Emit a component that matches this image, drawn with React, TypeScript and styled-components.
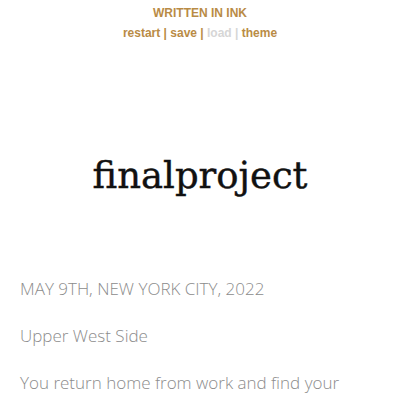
import React from "react";
import styled, { createGlobalStyle } from "styled-components";

const GlobalStyle = createGlobalStyle`
  html, body {
    margin: 0;
    padding: 0;
    background: #ffffff;
  }
  body {
    overflow: hidden;
  }
`;

const Page = styled.div`
  width: 400px;
  height: 400px;
  overflow: hidden;
  background: #ffffff;
`;

const Header = styled.header`
  padding-top: 3px;
  text-align: center;
  font-family: "Liberation Sans", Arial, sans-serif;
  font-weight: bold;
  font-size: 12px;
  line-height: 20px;
  color: #b98b45;
`;

const Byline = styled.h2`
  margin: 0;
  font-size: 12px;
  font-weight: bold;
  text-transform: uppercase;
`;

const Controls = styled.nav`
  white-space: pre;
`;

const ControlLink = styled.span<{ $disabled?: boolean }>`
  color: ${(p) => (p.$disabled ? "#d6d6d6" : "#b98b45")};
  cursor: ${(p) => (p.$disabled ? "default" : "pointer")};
`;

const Sep = styled.span<{ $faded?: boolean }>`
  color: ${(p) => (p.$faded ? "#d6d6d6" : "#b98b45")};
`;

const Title = styled.h1`
  margin: 105px 0 0;
  text-align: center;
  font-family: "DejaVu Serif", "Liberation Serif", serif;
  font-weight: normal;
  font-size: 37px;
  line-height: 55px;
  color: #111111;
  -webkit-text-stroke: 0.4px #111111;
`;

const Story = styled.main`
  margin-top: 71px;
  padding: 0 20px;
  font-family: "Open Sans", sans-serif;
  font-weight: 300;
  font-size: 17px;
  line-height: 29px;
  color: #8c8c8c;
`;

const Para = styled.p`
  margin: 0 0 18px;
`;

export default function App() {
  return (
    <Page>
      <GlobalStyle />
      <Header>
        <Byline>Written in Ink</Byline>
        <Controls>
          <ControlLink>restart</ControlLink>
          <Sep> | </Sep>
          <ControlLink>save</ControlLink>
          <Sep> | </Sep>
          <ControlLink $disabled>load</ControlLink>
          <Sep $faded> | </Sep>
          <ControlLink>theme</ControlLink>
        </Controls>
      </Header>
      <Title>finalproject</Title>
      <Story>
        <Para>MAY 9TH, NEW YORK CITY, 2022</Para>
        <Para>Upper West Side</Para>
        <Para>You return home from work and find your</Para>
      </Story>
    </Page>
  );
}
